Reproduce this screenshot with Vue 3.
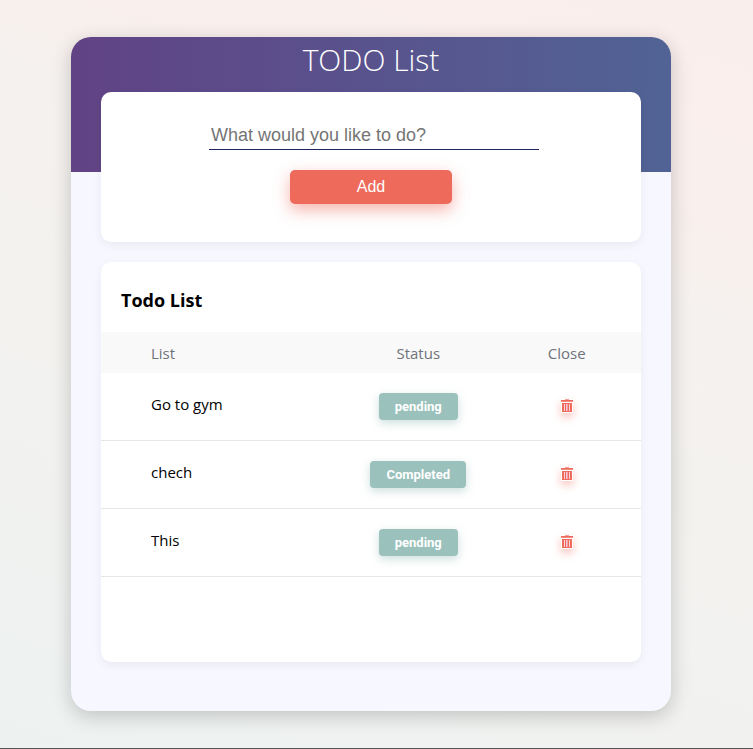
<script setup>
import { ref } from 'vue'

const draft = ref('')
const todos = ref([
  { id: 1, title: 'Go to gym', done: false },
  { id: 2, title: 'chech', done: true },
  { id: 3, title: 'This', done: false },
])
let nextId = 4

function add() {
  const title = draft.value.trim()
  if (!title) return
  todos.value.push({ id: nextId++, title, done: false })
  draft.value = ''
}

function remove(id) {
  todos.value = todos.value.filter((t) => t.id !== id)
}
</script>

<template>
  <div class="page">
    <main class="card">
      <h1 class="title">TODO List</h1>

      <form class="panel entry" @submit.prevent="add">
        <input v-model="draft" class="field" type="text" aria-label="New task" placeholder="What would you like to do?" />
        <button class="add" type="submit">Add</button>
      </form>

      <section class="panel list">
        <h2 class="heading">Todo List</h2>
        <table class="table">
          <thead>
            <tr>
              <th class="name">List</th>
              <th>Status</th>
              <th>Close</th>
            </tr>
          </thead>
          <tbody>
            <tr v-for="todo in todos" :key="todo.id">
              <td class="name">{{ todo.title }}</td>
              <td>
                <button class="status" type="button" @click="todo.done = !todo.done">
                  {{ todo.done ? 'Completed' : 'pending' }}
                </button>
              </td>
              <td class="action">
                <button class="remove" type="button" aria-label="Remove" @click="remove(todo.id)">
                  <svg width="12" height="14" viewBox="0 0 12 14" aria-hidden="true">
                    <path fill="#f4a49a" d="M4 0h4v1H4z" />
                    <path fill="#ee6a5b" d="M0 1h12v1H0zM1 4h10v9H1z" />
                    <path fill="#f18a7e" d="M0 2h12v1H0z" />
                    <path fill="#fbd0d8" d="M3 5h1v7H3zM8 5h1v7H8z" />
                    <path fill="#f7c3d8" d="M5 5h2v7H5z" />
                    <path fill="#ee6a5b" fill-opacity="0.4" d="M6 5h1v7H6z" />
                  </svg>
                </button>
              </td>
            </tr>
          </tbody>
        </table>
      </section>
    </main>
  </div>
</template>

<style>
body {
  font-family: 'Segoe UI', 'Open Sans', 'Noto Sans', sans-serif;
}
</style>

<style scoped>
.page {
  box-sizing: border-box;
  min-height: 100vh;
  padding: 37px 82px 37px 71px;
  border-bottom: 1px solid #555;
  background: linear-gradient(20deg, #edf2f1 0%, #f1f2f0 27%, #f5f1ee 68%, #f9efed 78%, #faeeec 100%);
}

.card {
  box-sizing: border-box;
  max-width: 600px;
  min-height: 674px;
  margin: 0 auto;
  padding: 0 30px 49px;
  border-radius: 20px;
  background: linear-gradient(to right, #614385, #516395) top / 100% 135px no-repeat #f6f7ff;
  box-shadow: 0 5px 20px rgba(0, 0, 0, 0.2);
}

.title {
  margin: 0;
  padding-bottom: 9px;
  color: #fff;
  font-size: 30px;
  font-weight: 300;
  line-height: 46px;
  text-align: center;
}

.panel {
  box-sizing: border-box;
  border-radius: 10px;
  background: #fff;
  box-shadow: 0 3px 10px rgba(0, 0, 0, 0.06);
}

.entry {
  display: flex;
  flex-direction: column;
  align-items: center;
  gap: 20px;
  min-height: 150px;
  padding: 30px 20px;
}

.field {
  box-sizing: border-box;
  width: 66%;
  height: 28px;
  margin-left: 6px;
  padding: 0 2px;
  border: 0;
  border-bottom: 1px solid #1d2460;
  outline: 0;
  background: transparent;
  color: #222;
  font: 18px 'Liberation Sans', Arial, sans-serif;
}

.field::placeholder {
  color: #757575;
  opacity: 1;
}

.add {
  width: 162px;
  height: 34px;
  padding: 0;
  border: 0;
  border-radius: 5px;
  background: #ee6a5b;
  box-shadow: 0 6px 16px rgba(238, 106, 91, 0.5);
  color: #fff;
  font: 16px 'Liberation Sans', Arial, sans-serif;
  cursor: pointer;
}

.list {
  min-height: 400px;
  margin-top: 20px;
  padding-top: 24px;
}

.heading {
  margin: 0;
  padding: 0 20px 18px;
  font-size: 18px;
  font-weight: 700;
  line-height: 28px;
}

.table {
  width: 100%;
  border-collapse: collapse;
  table-layout: fixed;
  font-size: 15px;
  line-height: 21px;
}

th {
  padding: 11px 0 9px;
  background: #f9f9f9;
  color: #6f7379;
  font-weight: 400;
}

td {
  height: 27px;
  padding: 20px 0;
  border-bottom: 1px solid #e6e6e6;
  line-height: 0;
  text-align: center;
}

.name {
  width: 45%;
  box-sizing: border-box;
  padding-left: 50px;
  text-align: left;
}

td.name {
  padding-top: 18px;
  padding-bottom: 22px;
  line-height: 27px;
}

.action {
  padding-top: 19px;
  padding-bottom: 21px;
}

.status {
  height: 27px;
  padding: 0 16px;
  border: 0;
  border-radius: 4px;
  background: #9ac1bc;
  box-shadow: 0 3px 8px rgba(154, 193, 188, 0.5);
  color: #fff;
  font: 700 13px Roboto, 'Liberation Sans', Arial, sans-serif;
  vertical-align: middle;
  cursor: pointer;
}

.remove {
  display: inline-flex;
  padding: 0;
  border: 0;
  background: #fff;
  box-shadow: 0 4px 8px rgba(238, 106, 91, 0.4);
  vertical-align: middle;
  cursor: pointer;
}
</style>
